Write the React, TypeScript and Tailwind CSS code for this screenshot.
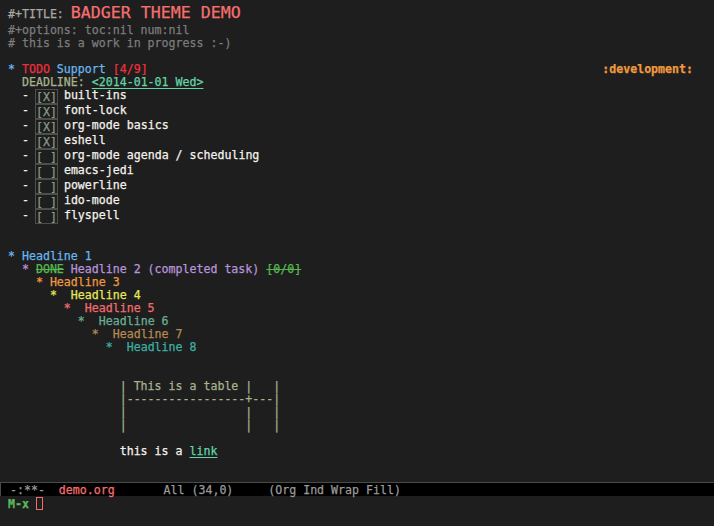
const mono = { fontFamily: '"DejaVu Sans Mono", "Liberation Mono", monospace' }

const items: { done: boolean; text: string }[] = [
  { done: true, text: 'built-ins' },
  { done: true, text: 'font-lock' },
  { done: true, text: 'org-mode basics' },
  { done: true, text: 'eshell' },
  { done: false, text: 'org-mode agenda / scheduling' },
  { done: false, text: 'emacs-jedi' },
  { done: false, text: 'powerline' },
  { done: false, text: 'ido-mode' },
  { done: false, text: 'flyspell' },
]

// indent of the star, gap after star, colour of the level
const headlines = [
  { pad: '      ', gap: '  ', color: 'text-[#e8e85c]', label: 'Headline 4' },
  { pad: '        ', gap: '  ', color: 'text-[#f26d6d]', label: 'Headline 5' },
  { pad: '          ', gap: '  ', color: 'text-[#6aae94]', label: 'Headline 6' },
  { pad: '            ', gap: '  ', color: 'text-[#b48a52]', label: 'Headline 7' },
  { pad: '              ', gap: '  ', color: 'text-[#3bb0a2]', label: 'Headline 8' },
]

function Blank() {
  return <div className="h-[13px]" />
}

function Line({ children, className = '' }: { children: React.ReactNode; className?: string }) {
  return <div className={`h-[13px] whitespace-pre pl-2 leading-[16px] ${className}`}>{children}</div>
}

export default function App() {
  return (
    <div
      style={mono}
      className="flex h-[526px] w-full flex-col overflow-hidden bg-[#1e1e1e] text-[11.6px] text-[#f4f2ec] [-webkit-text-stroke:0.25px_currentColor]"
    >
      {/* buffer */}
      <div className="flex-1">
        <div className="h-[22px] whitespace-pre pl-2 leading-[26px]">
          <span className="text-[#a9a9a3]">#+TITLE: </span>
          <span className="text-[16.6px] text-[#f66f6f]">BADGER THEME DEMO</span>
        </div>
        <Line className="text-[#7c7c7c]">#+options: toc:nil num:nil</Line>
        <Line className="text-[#7c7c7c]"># this is a work in progress :-)</Line>
        <Blank />
        <div className="flex h-[13px] whitespace-pre pl-2 pr-[21px] leading-[16px]">
          <span className="text-[#67b6ee]">* </span>
          <span className="text-[#ee2f3c]">TODO</span>
          <span className="text-[#67b6ee]"> Support </span>
          <span className="text-[#ee2f3c]">[4/9]</span>
          <span className="ml-auto font-bold text-[#ee9a3e]">:development:</span>
        </div>
        <Line>
          <span className="text-[#a6b38e]">  DEADLINE: </span>
          <span className="text-[#62d4a6] underline underline-offset-2">&lt;2014-01-01 Wed&gt;</span>
        </Line>
        {items.map((it) => (
          <div key={it.text} className="h-[15px] whitespace-pre pl-2 leading-[16px]">
            <span>  - </span>
            <span className="inline-block h-[13px] w-[21px] align-[-2px] leading-[14px] text-[#8a9a86] ring-1 ring-[#4e4e4e]">
              {it.done ? '[X]' : '[ ]'}
            </span>
            <span> {it.text}</span>
          </div>
        ))}
        <Blank />
        <Blank />
        <Line className="text-[#67b6ee]">* Headline 1</Line>
        <Line>
          <span className="text-[#bd8fd8]">  * </span>
          <span className="text-[#55b84f] line-through">DONE</span>
          <span className="text-[#b994dc]"> Headline 2 (completed task) </span>
          <span className="text-[#55b84f] line-through">[0/0]</span>
        </Line>
        <Line className="text-[#ee9a3e]">    * Headline 3</Line>
        {headlines.map((h) => (
          <Line key={h.label} className={h.color}>
            {h.pad}*{h.gap}
            {h.label}
          </Line>
        ))}
        <Blank />
        <Blank />
        <div className="text-[#a6b38e]">
          <Line>{'                | This is a table |   |'}</Line>
          <Line>{'                |-----------------+---|'}</Line>
          <Line>{'                |                 |   |'}</Line>
          <Line>{'                |                 |   |'}</Line>
        </div>
        <Blank />
        <Line>
          {'                this is a '}
          <span className="text-[#62d4a6] underline underline-offset-2">link</span>
        </Line>
      </div>

      {/* mode line */}
      <div className="h-[14px] whitespace-pre border-t border-l border-[#4a4a4a] bg-black pl-[2px] leading-[14px] text-[#9a9a9a]">
        {' -:**-  '}
        <span className="text-[#f66f6f]">demo.org</span>
        {'       All (34,0)     (Org Ind Wrap Fill)'}
      </div>

      {/* minibuffer */}
      <div className="flex h-[30px] items-start whitespace-pre pl-2 pt-[1px] leading-[14px]">
        <span className="font-bold text-[#5cb85c]">M-x </span>
        <span className="inline-block h-[13px] w-[7px] border border-[#f26d6d]" />
      </div>
    </div>
  )
}
